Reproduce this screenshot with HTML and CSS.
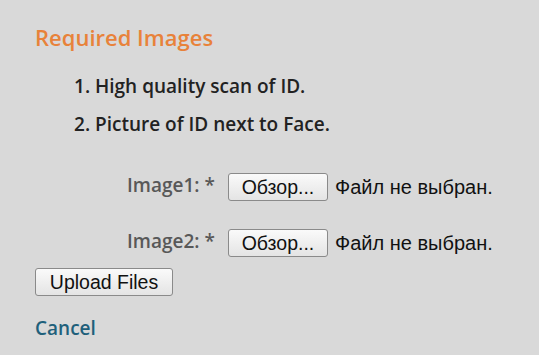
FILE: index.html
```html
<!DOCTYPE html>
<html>
<head>
<meta charset="utf-8">
<link rel="stylesheet" href="styles.css">
</head>
<body>
<div class="page">
  <h2 class="title">Required Images</h2>
  <ol class="reqs">
    <li>High quality scan of ID.</li>
    <li>Picture of ID next to Face.</li>
  </ol>
  <form class="form">
    <div class="row">
      <label class="label">Image1: *</label>
      <button type="button" class="btn browse">Обзор...</button>
      <span class="nofile">Файл не выбран.</span>
    </div>
    <div class="row">
      <label class="label">Image2: *</label>
      <button type="button" class="btn browse">Обзор...</button>
      <span class="nofile">Файл не выбран.</span>
    </div>
    <button type="button" class="btn upload">Upload Files</button>
  </form>
  <a class="cancel" href="#">Cancel</a>
</div>
</body>
</html>
```
FILE: styles.css
```css
html, body {
  margin: 0;
  padding: 0;
  background: #d9d9d9;
}
.page {
  padding: 23px 35px 0 35px;
  font-family: "Open Sans", sans-serif;
  display: flex;
  flex-direction: column;
  align-items: flex-start;
}
.title {
  margin: 0;
  font-size: 22px;
  font-weight: 600;
  color: #e8823a;
  line-height: 28px;
}
.reqs {
  margin: 24px 0 0 0;
  padding: 0 0 0 39px;
  list-style: none;
  counter-reset: n;
}
.reqs li {
  counter-increment: n;
  font-size: 19px;
  font-weight: 600;
  color: #222;
  line-height: 22px;
  margin-bottom: 16px;
}
.reqs li::before {
  content: counter(n) ". ";
}
.form {
  margin-top: 22px;
  display: flex;
  flex-direction: column;
  align-items: flex-start;
}
.row {
  display: flex;
  align-items: center;
  padding-left: 92px;
  height: 28px;
  margin-bottom: 28px;
}
.row + .row {
  margin-bottom: 11px;
}
.label {
  font-size: 19px;
  font-weight: 600;
  color: #585858;
  width: 101px;
  margin-top: -5px;
}
.btn {
  box-sizing: border-box;
  font-family: "Liberation Sans", Arial, sans-serif;
  font-size: 19.5px;
  color: #111;
  background: linear-gradient(#fafafa, #e4e4e4);
  border: 1px solid #8a8a8a;
  border-radius: 3px;
  padding: 0;
  height: 28px;
}
.browse {
  width: 100px;
}
.nofile {
  font-family: "Liberation Sans", Arial, sans-serif;
  font-size: 20px;
  color: #111;
  margin-left: 7px;
}
.upload {
  width: 138px;
}
.cancel {
  margin-top: 19px;
  font-size: 19px;
  font-weight: 600;
  color: #1f607b;
  text-decoration: none;
}
```
